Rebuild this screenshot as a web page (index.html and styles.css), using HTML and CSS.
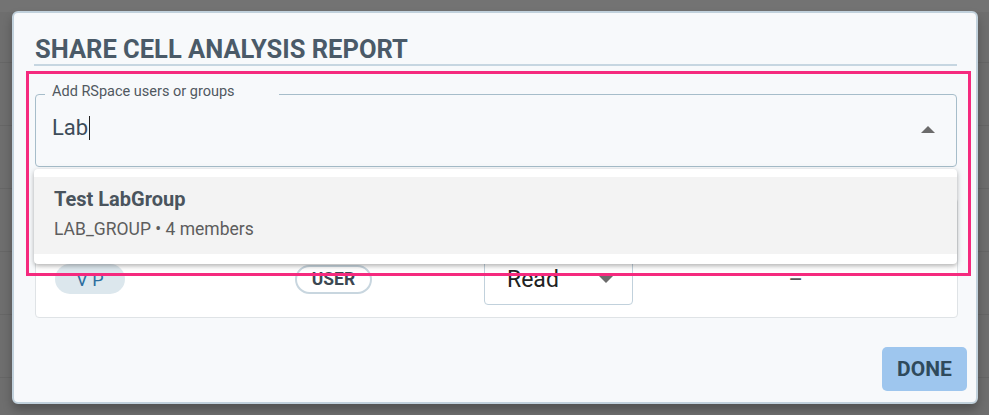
FILE: index.html
```html
<!DOCTYPE html>
<html lang="en">
<head>
<meta charset="utf-8">
<title>Share Cell Analysis Report</title>
<link rel="stylesheet" href="styles.css">
</head>
<body>
<div class="backdrop">
  <div class="dialog">
    <h2 class="title">SHARE CELL ANALYSIS REPORT</h2>
    <div class="divider"></div>
    <div class="search">
      <div class="field">
        <span class="notch"></span>
        <span class="label">Add RSpace users or groups</span>
        <span class="value">Lab<span class="caret"></span></span>
        <svg class="arrow" width="14" height="8" viewBox="0 0 14 8"><path d="M0 7 L7 0 L14 7 Z" fill="#6b6b6b"/></svg>
      </div>
      <div class="listbox">
        <div class="option">
          <div class="opt-name">Test LabGroup</div>
          <div class="opt-meta">LAB_GROUP • 4 members</div>
        </div>
      </div>
    </div>
    <div class="card">
      <div class="row">
        <div class="cell c-name"><span class="chip">V P</span></div>
        <div class="cell c-type"><span class="tag">USER</span></div>
        <div class="cell c-perm">
          <div class="select">
            <span>Read</span>
            <svg width="14" height="8" viewBox="0 0 14 8"><path d="M0 1 L7 8 L14 1 Z" fill="#6b6b6b"/></svg>
          </div>
        </div>
        <div class="cell c-dash">–</div>
      </div>
    </div>
    <div class="actions">
      <button class="done">DONE</button>
    </div>
    <div class="highlight"></div>
  </div>
</div>
</body>
</html>
```

FILE: styles.css
```css
* { box-sizing: border-box; }
html, body { margin: 0; padding: 0; }
body {
  width: 989px;
  height: 415px;
  overflow: hidden;
  font-family: Roboto, "Liberation Sans", sans-serif;
  background: #6f6f6f;
}
.backdrop {
  width: 989px;
  height: 415px;
  padding: 11px 11px 0 12px;
  background:
    linear-gradient(#737373, #737373) 0 0 / 100% 12px no-repeat,
    repeating-linear-gradient(180deg, #6e6e6e 0, #6e6e6e 62px, #666 62px, #666 63px);
  background-color: #6e6e6e;
}
.dialog {
  position: relative;
  width: 966px;
  height: 393px;
  background: #f7f9fb;
  border: 2px solid #c1d1dc;
  border-radius: 6px;
  box-shadow: 0 6px 10px rgba(0,0,0,0.25);
  padding: 0 19px 0 20px;
  display: flex;
  flex-direction: column;
}
.title {
  margin: 22px 0 0 1px;
  font-size: 25.5px;
  line-height: 28px;
  font-weight: 700;
  color: #4a5a68;
  letter-spacing: 0;
}
.divider {
  height: 2px;
  background: #c6d6e1;
  margin-top: 1px;
  width: 923px;
}
.search {
  position: relative;
  margin-top: 28px;
  margin-left: 1px;
  width: 922px;
}
.field {
  position: relative;
  height: 73px;
  border: 1.5px solid #a6bdca;
  border-radius: 4px;
}
.notch {
  position: absolute;
  left: 9px;
  top: -3px;
  width: 234px;
  height: 5px;
  background: #f7f9fb;
}
.label {
  position: absolute;
  left: 16px;
  top: -12px;
  font-size: 14.5px;
  line-height: 18px;
  color: #50585f;
}
.value {
  position: absolute;
  left: 16px;
  top: 19px;
  font-size: 22px;
  line-height: 28px;
  color: #3d4c59;
}
.caret {
  display: inline-block;
  width: 1px;
  height: 24px;
  background: #222;
  vertical-align: -5px;
  margin-left: 1px;
}
.arrow {
  position: absolute;
  right: 21px;
  top: 31px;
}
.listbox {
  position: absolute;
  left: -1px;
  top: 75px;
  width: 923px;
  height: 95px;
  background: #fff;
  border-radius: 4px;
  box-shadow: 0 2px 4px rgba(0,0,0,0.25), 0 1px 8px rgba(0,0,0,0.08);
  padding-top: 8px;
  z-index: 2;
}
.option {
  height: 77px;
  background: #f3f3f3;
  padding: 9px 20px 0;
}
.opt-name {
  font-size: 20px;
  line-height: 26px;
  font-weight: 700;
  color: #4a545d;
}
.opt-meta {
  margin-top: 6px;
  font-size: 17.5px;
  line-height: 22px;
  color: #5d5d5d;
}
.card {
  margin-top: 31px;
  margin-left: 1px;
  width: 923px;
  height: 120px;
  background: #fff;
  border: 1px solid #dfe3e6;
  border-radius: 4px;
  display: flex;
  flex-direction: column;
  justify-content: flex-end;
  padding-bottom: 9px;
}
.row {
  display: flex;
  align-items: center;
  height: 58px;
}
.cell { display: flex; align-items: center; }
.c-name { width: 259px; padding-left: 19px; }
.c-type { width: 189px; }
.c-perm { width: 150px; }
.c-dash { width: 175px; justify-content: flex-end; color: #555; font-size: 22px; padding-right: 6px; }
.chip {
  display: inline-flex;
  align-items: center;
  justify-content: center;
  width: 70px;
  height: 30px;
  border-radius: 15px;
  background: #dce7ed;
  color: #2d6e9f;
  font-size: 18px;
}
.tag {
  display: inline-flex;
  align-items: center;
  justify-content: center;
  width: 77px;
  height: 29px;
  border: 2px solid #c8d6df;
  border-radius: 15px;
  color: #3c4852;
  font-size: 17.5px;
  font-weight: 700;
}
.select {
  width: 149px;
  height: 58px;
  border: 1.5px solid #c1d1dc;
  border-radius: 4px;
  display: flex;
  align-items: center;
  justify-content: space-between;
  padding: 6px 19px 0 22px;
  font-size: 23px;
  color: #222;
  margin-top: -6px;
}
.actions {
  flex: 1;
  display: flex;
  justify-content: flex-end;
  align-items: flex-start;
  padding-top: 29px;
  padding-right: 0;
}
.done {
  width: 85px;
  height: 44px;
  border: none;
  border-radius: 5px;
  background: #9ec6ee;
  color: #2f4a5c;
  font-family: Roboto, "Liberation Sans", sans-serif;
  font-size: 21px;
  font-weight: 700;
  margin-right: -10px;
}
.highlight {
  position: absolute;
  left: 12px;
  top: 58px;
  width: 945px;
  height: 205px;
  border: 3.5px solid #f52a7e;
  z-index: 3;
  pointer-events: none;
}
```
